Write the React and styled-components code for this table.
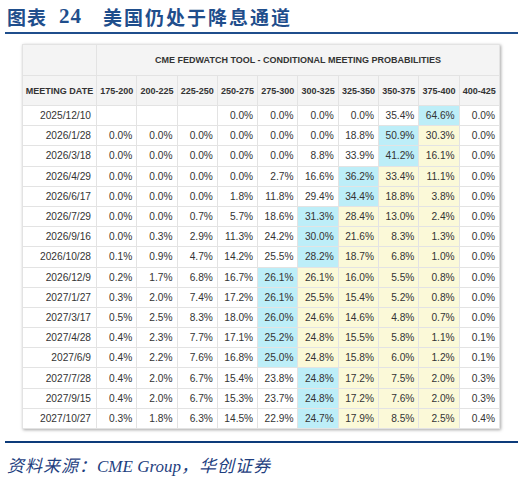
import React from 'react'
import styled, { createGlobalStyle } from 'styled-components';

const GlobalStyle = createGlobalStyle`
  body {
    margin: 0;
    background: #ffffff;
  }
`

const ranges = ['175-200', '200-225', '225-250', '250-275', '275-300', '300-325', '325-350', '350-375', '375-400', '400-425'];

// [date, cyan column index, values...]
const rows = [
  ['2025/12/10', 8, [null, null, null, 0.0, 0.0, 0.0, 0.0, 35.4, 64.6, 0.0]],
  ['2026/1/28', 7, [0.0, 0.0, 0.0, 0.0, 0.0, 0.0, 18.8, 50.9, 30.3, 0.0]],
  ['2026/3/18', 7, [0.0, 0.0, 0.0, 0.0, 0.0, 8.8, 33.9, 41.2, 16.1, 0.0]],
  ['2026/4/29', 6, [0.0, 0.0, 0.0, 0.0, 2.7, 16.6, 36.2, 33.4, 11.1, 0.0]],
  ['2026/6/17', 6, [0.0, 0.0, 0.0, 1.8, 11.8, 29.4, 34.4, 18.8, 3.8, 0.0]],
  ['2026/7/29', 5, [0.0, 0.0, 0.7, 5.7, 18.6, 31.3, 28.4, 13.0, 2.4, 0.0]],
  ['2026/9/16', 5, [0.0, 0.3, 2.9, 11.3, 24.2, 30.0, 21.6, 8.3, 1.3, 0.0]],
  ['2026/10/28', 5, [0.1, 0.9, 4.7, 14.2, 25.5, 28.2, 18.7, 6.8, 1.0, 0.0]],
  ['2026/12/9', 4, [0.2, 1.7, 6.8, 16.7, 26.1, 26.1, 16.0, 5.5, 0.8, 0.0]],
  ['2027/1/27', 4, [0.3, 2.0, 7.4, 17.2, 26.1, 25.5, 15.4, 5.2, 0.8, 0.0]],
  ['2027/3/17', 4, [0.5, 2.5, 8.3, 18.0, 26.0, 24.6, 14.6, 4.8, 0.7, 0.0]],
  ['2027/4/28', 4, [0.4, 2.3, 7.7, 17.1, 25.2, 24.8, 15.5, 5.8, 1.1, 0.1]],
  ['2027/6/9', 4, [0.4, 2.2, 7.6, 16.8, 25.0, 24.8, 15.8, 6.0, 1.2, 0.1]],
  ['2027/7/28', 5, [0.4, 2.0, 6.7, 15.4, 23.8, 24.8, 17.2, 7.5, 2.0, 0.3]],
  ['2027/9/15', 5, [0.4, 2.0, 6.7, 15.3, 23.7, 24.8, 17.2, 7.6, 2.0, 0.3]],
  ['2027/10/27', 5, [0.3, 1.8, 6.3, 14.5, 22.9, 24.7, 17.9, 8.5, 2.5, 0.4]],
];

const toneOf = (col, cyan) => {
  if (col === cyan) return 'cyan';
  if (col > cyan && col <= 8) return 'yellow';
  return 'plain';
};

function App() {
  return (
    <>
      <GlobalStyle />
      <Page>
        <TitleBar>
          <TitleLabel>图表</TitleLabel>
          <TitleNum>24</TitleNum>
          <TitleText>美国仍处于降息通道</TitleText>
        </TitleBar>

        <TableArea>
          <Table>
            <colgroup>
              <col style={{ width: 74 }} />
              {ranges.map(r => <col key={r} />)}
            </colgroup>
            <thead>
              <TopRow>
                <HeadCell />
                <HeadCell colSpan={10}>CME FEDWATCH TOOL - CONDITIONAL MEETING PROBABILITIES</HeadCell>
              </TopRow>
              <LabelRow>
                <HeadCell>MEETING DATE</HeadCell>
                {ranges.map(r => <HeadCell key={r}>{r}</HeadCell>)}
              </LabelRow>
            </thead>
            <tbody>
              {rows.map(([date, cyan, values]) => (
                <Row key={date}>
                  <DateCell>{date}</DateCell>
                  {values.map((v, i) => (
                    <Cell key={i} tone={v === null ? 'plain' : toneOf(i, cyan)}>
                      {v === null ? '' : v.toFixed(1) + '%'}
                    </Cell>
                  ))}
                </Row>
              ))}
            </tbody>
          </Table>
        </TableArea>

        <SourceLine>资料来源：<Latin>CME Group</Latin>，华创证券</SourceLine>
      </Page>
    </>
  )
}

export default App

const Page = styled.div`
  width: 524px;
  height: 477px;
  box-sizing: border-box;
  padding: 0 6px 0 5px;
  background: #ffffff;
`

const TitleBar = styled.div`
  height: 32px;
  display: flex;
  align-items: center;
  padding-left: 2px;
  border-bottom: 2px solid #1f4e8c;
  color: #1f4e8c;
  font-family: "Liberation Serif", "Noto Sans CJK SC", serif;
  font-weight: bold;
  font-size: 19px;
  letter-spacing: 1px;
`

const TitleLabel = styled.span`
  margin-right: 12px;
`

const TitleNum = styled.span`
  font-size: 21px;
  margin-right: 21px;
`

const TitleText = styled.span`
  letter-spacing: 2px;
`

const TableArea = styled.div`
  padding: 10px 0 12px 17px;
`

const Table = styled.table`
  width: 478px;
  table-layout: fixed;
  border-collapse: collapse;
  font-family: "Liberation Sans", Arial, sans-serif;
  color: #333333;
  box-shadow: 1px 1px 3px rgba(0, 0, 0, 0.35);
  border: 1px solid #dcdcdc;
`

const TopRow = styled.tr`
  height: 31px;
`

const LabelRow = styled.tr`
  height: 30px;
`

const HeadCell = styled.th`
  background: #f4f4f4;
  border: 1px solid #e3e3e3;
  font-size: 9px;
  font-weight: bold;
  text-align: center;
  padding: 0;
  white-space: nowrap;
  color: #333333;
`

const Row = styled.tr`
  height: 20.2px;
`

const DateCell = styled.td`
  border: 1px solid #e3e3e3;
  font-size: 10.2px;
  text-align: right;
  padding: 0 5px 0 0;
  background: #ffffff;
  white-space: nowrap;
`

const Cell = styled.td`
  border: 1px solid #e3e3e3;
  font-size: 10.2px;
  text-align: right;
  padding: 0 4px 0 0;
  white-space: nowrap;
  background: ${props =>
    props.tone === 'cyan' ? '#bdeef8' : props.tone === 'yellow' ? '#fbf9d8' : '#ffffff'};
`

const SourceLine = styled.div`
  border-top: 2px solid #0d3b7a;
  padding: 9px 0 0 2px;
  color: #1f3f7f;
  font-family: "Liberation Serif", "Noto Sans CJK SC", serif;
  font-style: italic;
  font-size: 17px;
  letter-spacing: 1px;
`

const Latin = styled.span`
  letter-spacing: 0;
`
